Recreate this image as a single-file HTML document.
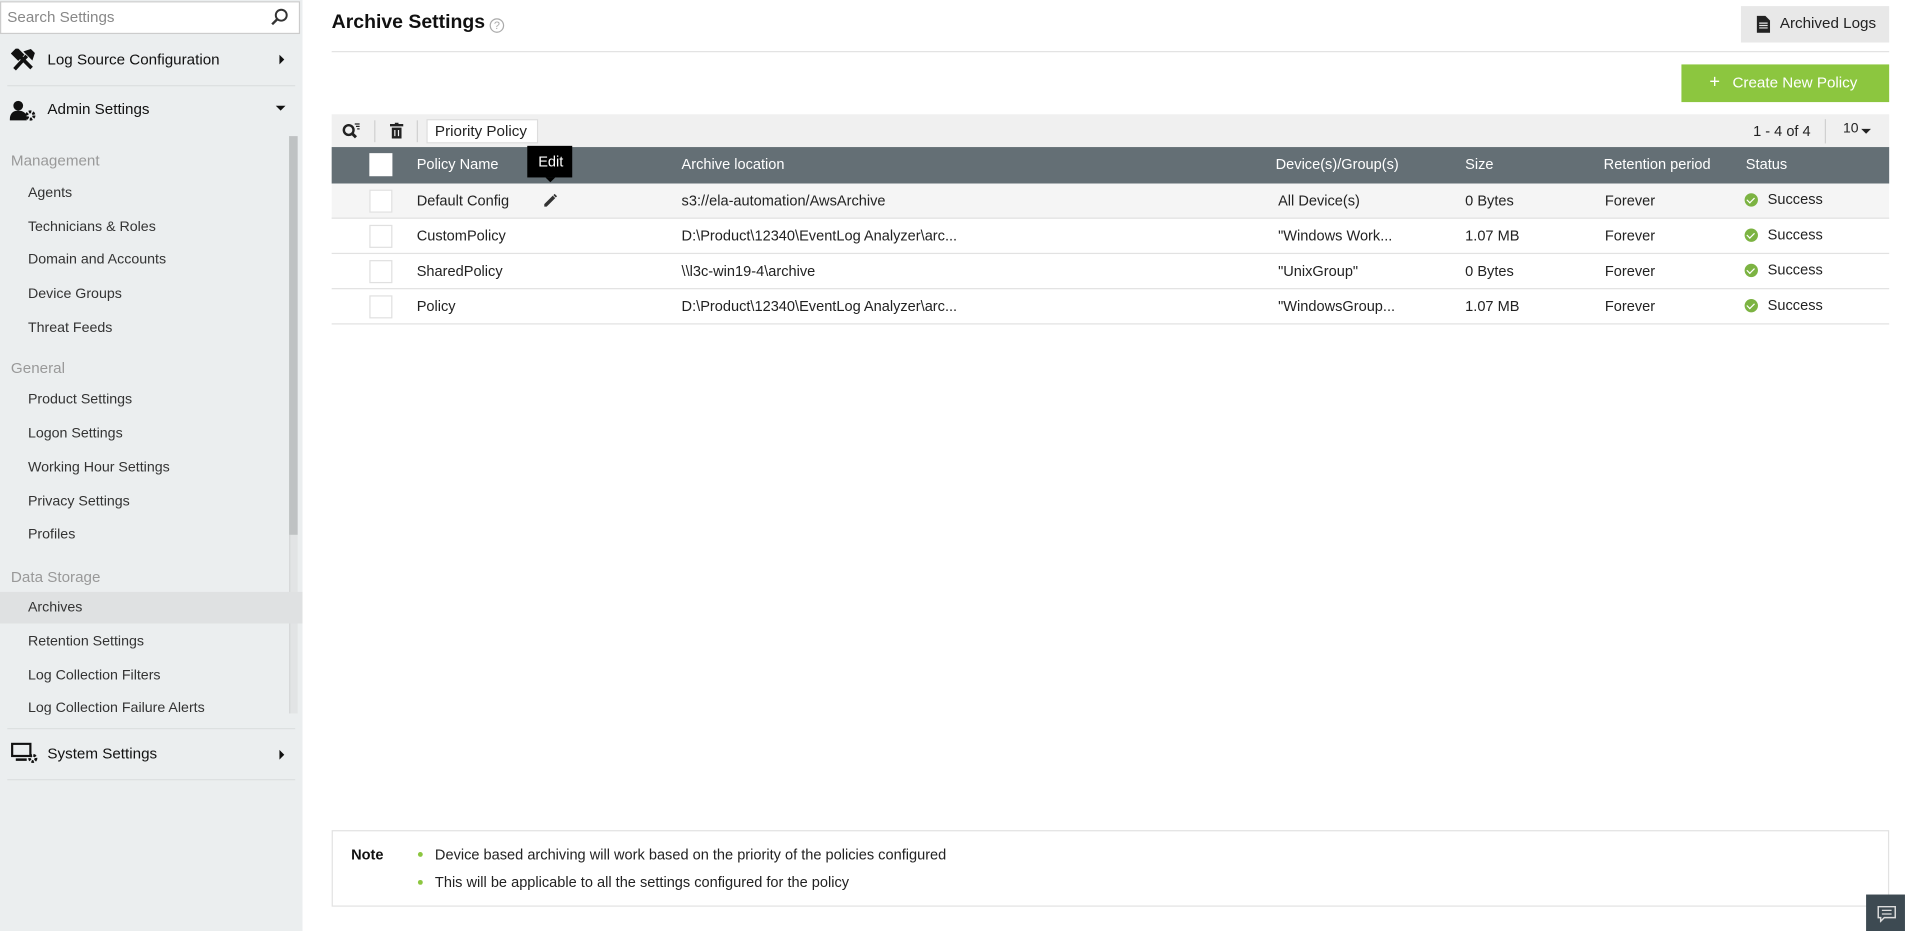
<!DOCTYPE html>
<html><head><meta charset="utf-8"><style>
*{box-sizing:border-box;margin:0;padding:0}
html,body{width:1905px;height:931px;overflow:hidden;background:#fff}
#w{position:absolute;left:0;top:0;width:1568px;height:766px;transform:scale(1.2149,1.2154);transform-origin:0 0;font-family:"Liberation Sans",sans-serif;font-size:12px;color:#222}
.a{position:absolute;white-space:nowrap}
#sb{position:absolute;left:0;top:0;width:249px;height:766px;background:#ebeeef}
.it{position:absolute;left:23px;font-size:11.7px;color:#333}
.hd{position:absolute;left:9px;font-size:12.5px;color:#999}
.dv{position:absolute;left:6px;width:237px;height:1px;background:#dcdfe0}
.mn{position:absolute;left:39px;font-size:12.5px;color:#111}
.tri{position:absolute;width:0;height:0}
.row{position:absolute;left:273px;width:1282px;height:29px;border-bottom:1px solid #e2e2e2}
.cb{position:absolute;left:31px;top:5px;width:19px;height:19px;background:#fff;border:1px solid #e0e0e0}
.c{position:absolute;top:7px;font-size:12px;color:#222}
.ok{position:absolute;left:1163px;top:8px;width:11px;height:11px;border-radius:50%;background:#7cb342}
.ok:after{content:"";position:absolute;left:3px;top:2px;width:3px;height:5px;border:solid #fff;border-width:0 1.3px 1.3px 0;transform:rotate(45deg)}
</style></head><body><div id="w">
<div id="sb">
 <div class="a" style="left:0;top:1px;width:247px;height:27px;background:#fff;border:1px solid #ccc"></div>
 <div class="a" style="left:6px;top:7px;color:#888;font-size:12.5px">Search Settings</div>
 <svg class="a" style="left:222px;top:6px" width="16" height="16" viewBox="0 0 16 16"><circle cx="9.5" cy="6.5" r="4.5" fill="none" stroke="#333" stroke-width="1.6"/><path d="M6.3 9.7 2 14" stroke="#333" stroke-width="2"/></svg>
 <svg class="a" style="left:9px;top:40px" width="20" height="20" viewBox="0 0 20 20"><path d="M3 17 13 6M6 5l11 11M2 4l3-3 4 4-3 3zM13 3l3-1 2 2-1 3z" stroke="#111" stroke-width="3" fill="#111"/></svg>
 <div class="mn" style="top:42px">Log Source Configuration</div>
 <div class="tri" style="left:230px;top:45px;border-left:4px solid #111;border-top:4px solid transparent;border-bottom:4px solid transparent"></div>
 <div class="dv" style="top:70px"></div>
 <svg class="a" style="left:8px;top:82px" width="22" height="18" viewBox="0 0 22 18"><circle cx="7" cy="5" r="4" fill="#111"/><path d="M0 17c0-6 3-8 7-8s6 2 7 4v4z" fill="#111"/><circle cx="17" cy="13" r="3" fill="none" stroke="#111" stroke-width="2.4" stroke-dasharray="2 1.2"/></svg>
 <div class="mn" style="top:83px">Admin Settings</div>
 <div class="tri" style="left:227px;top:87px;border-top:4px solid #111;border-left:4px solid transparent;border-right:4px solid transparent"></div>
 <div class="a" style="left:238px;top:112px;width:7px;height:475px;background:#e2e4e5;border-left:1px solid #d5d7d8"></div>
 <div class="a" style="left:238px;top:112px;width:7px;height:328px;background:#bfc2c3"></div>
 <div class="hd" style="top:125px">Management</div>
 <div class="it" style="top:152px">Agents</div>
 <div class="it" style="top:180px">Technicians &amp; Roles</div>
 <div class="it" style="top:207px">Domain and Accounts</div>
 <div class="it" style="top:235px">Device Groups</div>
 <div class="it" style="top:263px">Threat Feeds</div>
 <div class="hd" style="top:296px">General</div>
 <div class="it" style="top:322px">Product Settings</div>
 <div class="it" style="top:350px">Logon Settings</div>
 <div class="it" style="top:378px">Working Hour Settings</div>
 <div class="it" style="top:406px">Privacy Settings</div>
 <div class="it" style="top:433px">Profiles</div>
 <div class="hd" style="top:468px">Data Storage</div>
 <div class="a" style="left:0;top:487px;width:249px;height:26px;background:#dfe1e2"></div>
 <div class="it" style="top:493px">Archives</div>
 <div class="it" style="top:521px">Retention Settings</div>
 <div class="it" style="top:549px">Log Collection Filters</div>
 <div class="it" style="top:576px">Log Collection Failure Alerts</div>
 <div class="a" style="left:0;top:588px;width:249px;height:10px;background:#ebeeef"></div>
 <div class="dv" style="top:599px"></div>
 <svg class="a" style="left:9px;top:611px" width="23" height="18" viewBox="0 0 23 18"><rect x="1" y="1" width="15" height="10" fill="none" stroke="#111" stroke-width="1.8"/><path d="M4 13h9v2H4z" fill="#111"/><circle cx="18" cy="13" r="2.6" fill="none" stroke="#111" stroke-width="2.3" stroke-dasharray="2 1.1"/></svg>
 <div class="mn" style="top:613px">System Settings</div>
 <div class="tri" style="left:230px;top:617px;border-left:4px solid #111;border-top:4px solid transparent;border-bottom:4px solid transparent"></div>
 <div class="dv" style="top:641px"></div>
</div>
<div class="a" style="left:273px;top:10px;font-size:16px;font-weight:bold;color:#111">Archive Settings</div>
<div class="a" style="left:403px;top:15px;width:12px;height:12px;border:1px solid #aaa;border-radius:50%;font-size:9px;color:#aaa;text-align:center;line-height:10px">?</div>
<div class="a" style="left:273px;top:42px;width:1282px;height:1px;background:#e2e2e2"></div>
<div class="a" style="left:1433px;top:5px;width:122px;height:30px;background:#e8e8e8"></div>
<svg class="a" style="left:1446px;top:13px" width="11" height="14" viewBox="0 0 11 14"><path d="M0 0h7l4 4v10H0z" fill="#222"/><path d="M2 6h7M2 8h7M2 10h7" stroke="#e8e8e8"/></svg>
<div class="a" style="left:1465px;top:12px;font-size:12.5px;color:#222">Archived Logs</div>
<div class="a" style="left:1384px;top:53px;width:171px;height:31px;background:#8cc63f"></div>
<div class="a" style="left:1407px;top:59px;font-size:15px;color:#fff">+</div>
<div class="a" style="left:1426px;top:61px;font-size:12.5px;color:#fff">Create New Policy</div>
<div class="a" style="left:273px;top:94px;width:1282px;height:27px;background:#f0f0f0"></div>
<svg class="a" style="left:281px;top:101px" width="16" height="14" viewBox="0 0 16 14"><circle cx="6" cy="6" r="4" fill="none" stroke="#222" stroke-width="2"/><path d="M9 9l3 3" stroke="#222" stroke-width="2.4"/><path d="M11 1h4M12 3h3M13 5h2" stroke="#222"/></svg>
<div class="a" style="left:308px;top:99px;width:1px;height:18px;background:#d0d0d0"></div>
<svg class="a" style="left:321px;top:101px" width="11" height="13" viewBox="0 0 11 13"><path d="M0 2h11M4 0h3" stroke="#222" stroke-width="2"/><path d="M1.5 4h8v9h-8z" fill="#222"/><path d="M4 6v5M7 6v5" stroke="#f0f0f0"/></svg>
<div class="a" style="left:343px;top:99px;width:1px;height:18px;background:#d0d0d0"></div>
<div class="a" style="left:351px;top:98px;width:92px;height:20px;background:#fff;border:1px solid #ddd"></div>
<div class="a" style="left:358px;top:101px;font-size:12.5px;color:#222">Priority Policy</div>
<div class="a" style="left:1443px;top:101px;font-size:12px;color:#222">1 - 4 of 4</div>
<div class="a" style="left:1502px;top:98px;width:1px;height:20px;background:#d0d0d0"></div>
<div class="a" style="left:1517px;top:100px;font-size:11.5px;color:#222">10</div>
<div class="tri" style="left:1532px;top:106px;border-top:4px solid #222;border-left:4px solid transparent;border-right:4px solid transparent"></div>
<div class="a" style="left:273px;top:121px;width:1282px;height:30px;background:#646f75"></div>
<div class="a" style="left:304px;top:126px;width:19px;height:19px;background:#fff"></div>
<div class="a" style="left:343px;top:128px;color:#fff;font-size:12px">Policy Name</div>
<div class="a" style="left:561px;top:128px;color:#fff;font-size:12px">Archive location</div>
<div class="a" style="left:1050px;top:128px;color:#fff;font-size:12px">Device(s)/Group(s)</div>
<div class="a" style="left:1206px;top:128px;color:#fff;font-size:12px">Size</div>
<div class="a" style="left:1320px;top:128px;color:#fff;font-size:12px">Retention period</div>
<div class="a" style="left:1437px;top:128px;color:#fff;font-size:12px">Status</div>
<div class="row" style="top:151px;background:#f5f5f5"><div class="cb"></div><div class="c" style="left:70px">Default Config</div>
<svg class="a" style="left:173px;top:8px" width="13" height="13" viewBox="0 0 13 13"><path d="M2 9 9 2l2 2-7 7H2z" fill="#333"/><path d="M10 1l2 2" stroke="#333" stroke-width="1.5"/></svg>
<div class="c" style="left:288px">s3://ela-automation/AwsArchive</div><div class="c" style="left:779px">All Device(s)</div><div class="c" style="left:933px">0 Bytes</div><div class="c" style="left:1048px">Forever</div><div class="ok"></div><div class="c" style="left:1182px;top:6px">Success</div></div>
<div class="row" style="top:180px"><div class="cb"></div><div class="c" style="left:70px">CustomPolicy</div><div class="c" style="left:288px">D:\Product\12340\EventLog Analyzer\arc...</div><div class="c" style="left:779px">"Windows Work...</div><div class="c" style="left:933px">1.07 MB</div><div class="c" style="left:1048px">Forever</div><div class="ok"></div><div class="c" style="left:1182px;top:6px">Success</div></div>
<div class="row" style="top:209px"><div class="cb"></div><div class="c" style="left:70px">SharedPolicy</div><div class="c" style="left:288px">\\l3c-win19-4\archive</div><div class="c" style="left:779px">"UnixGroup"</div><div class="c" style="left:933px">0 Bytes</div><div class="c" style="left:1048px">Forever</div><div class="ok"></div><div class="c" style="left:1182px;top:6px">Success</div></div>
<div class="row" style="top:238px"><div class="cb"></div><div class="c" style="left:70px">Policy</div><div class="c" style="left:288px">D:\Product\12340\EventLog Analyzer\arc...</div><div class="c" style="left:779px">"WindowsGroup...</div><div class="c" style="left:933px">1.07 MB</div><div class="c" style="left:1048px">Forever</div><div class="ok"></div><div class="c" style="left:1182px;top:6px">Success</div></div>
<div class="a" style="left:434px;top:120px;width:37px;height:26px;background:#000"></div>
<div class="a" style="left:443px;top:126px;color:#fff;font-size:12px">Edit</div>
<div class="tri" style="left:449px;top:146px;border-top:4px solid #000;border-left:4px solid transparent;border-right:4px solid transparent"></div>
<div class="a" style="left:273px;top:683px;width:1282px;height:63px;border:1px solid #e2e2e2"></div>
<div class="a" style="left:289px;top:696px;font-weight:bold;font-size:12px;color:#111">Note</div>
<div class="a" style="left:344px;top:701px;width:4px;height:4px;border-radius:50%;background:#8cc63f"></div>
<div class="a" style="left:358px;top:696px;font-size:12px">Device based archiving will work based on the priority of the policies configured</div>
<div class="a" style="left:344px;top:724px;width:4px;height:4px;border-radius:50%;background:#8cc63f"></div>
<div class="a" style="left:358px;top:719px;font-size:12px">This will be applicable to all the settings configured for the policy</div>
<div class="a" style="left:1536px;top:736px;width:32px;height:30px;background:#3d4a52"></div>
<svg class="a" style="left:1545px;top:745px" width="16" height="14" viewBox="0 0 16 14"><path d="M1 1h14v9H6l-3 3v-3H1z" fill="none" stroke="#ddd" stroke-width="1.2"/><path d="M4 4h8M4 7h8" stroke="#ddd"/></svg>
</div></body></html>
